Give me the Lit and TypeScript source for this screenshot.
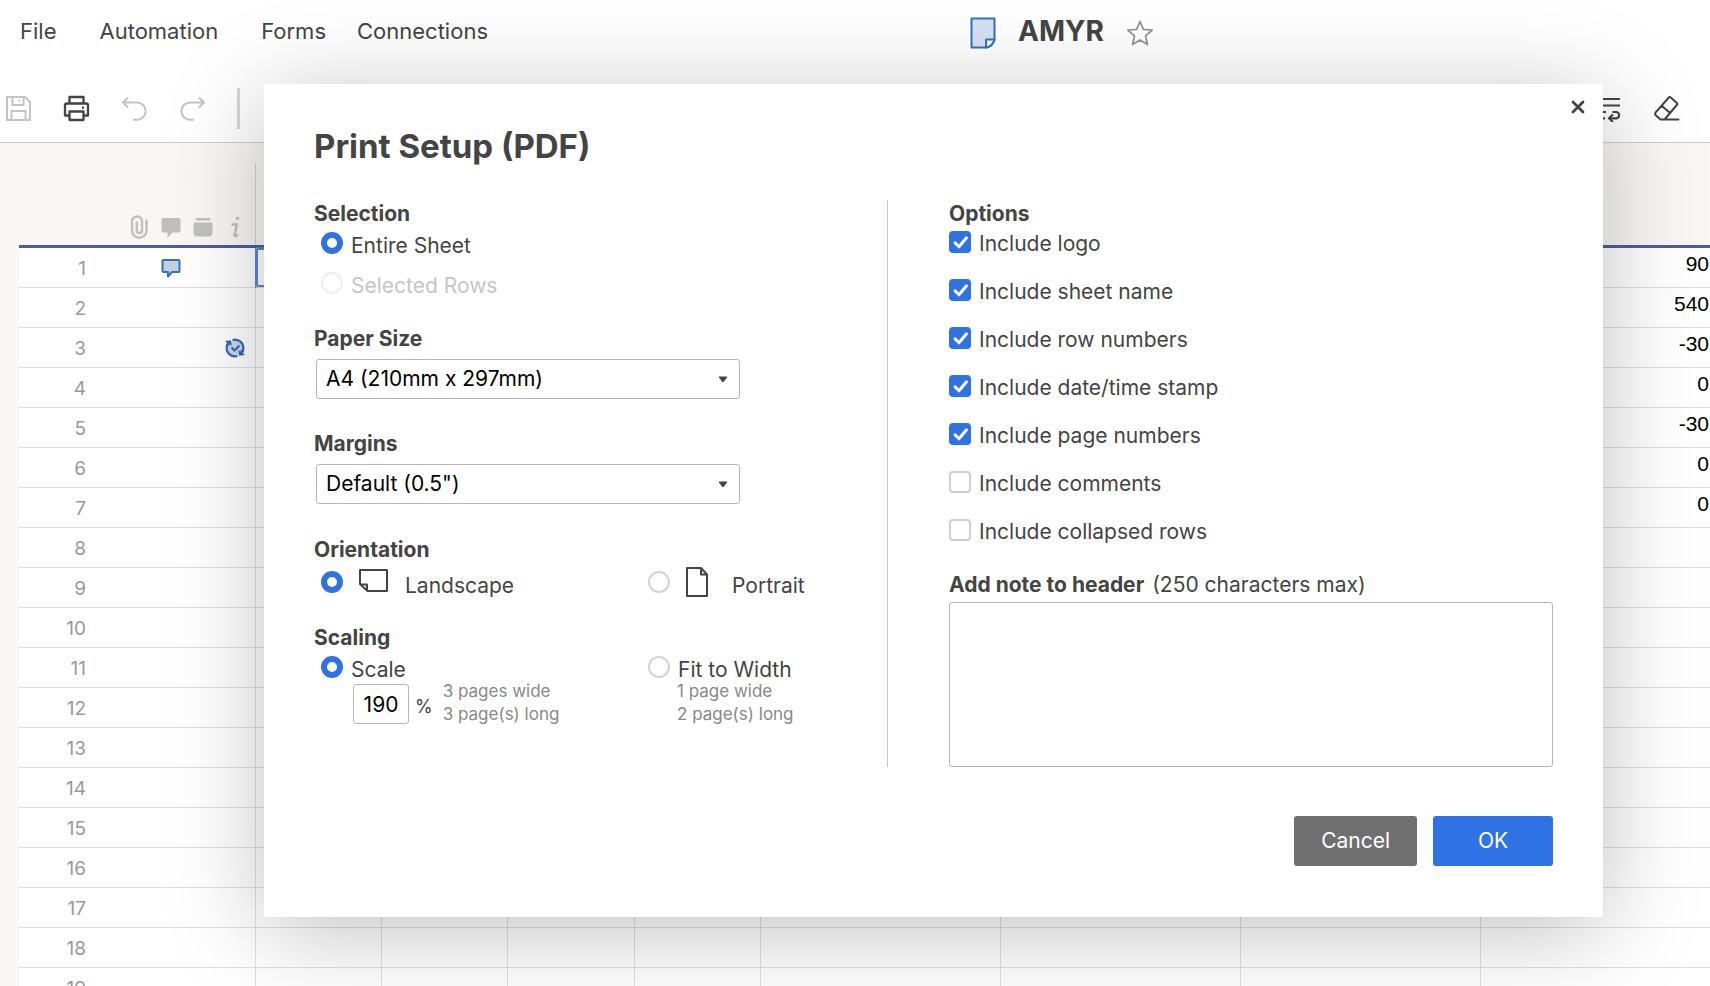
import { LitElement, html, css, svg, nothing } from "lit";
import { customElement, property, state } from "lit/decorators.js";
import { classMap } from "lit/directives/class-map.js";

const icons = {
  save: svg`<g fill="none" stroke="currentColor" stroke-width="2"><path d="M2 2h18l5 5v18H2z"/><path d="M7.500 2v8h11V2M6.500 25v-9h14v9M14.500 4.500v2"/></g>`,
  print: svg`<g fill="none" stroke="currentColor" stroke-width="2.300" stroke-linejoin="round"><path d="M6.500 8.500V2h14v6.500"/><path d="M6.500 20.500h-4.500v-10q0-2 2-2h19q2 0 2 2v10h-4.500"/><path d="M6.500 16.500h14v8.500h-14z"/><path d="M19 12.700h2"/></g>`,
  undo: svg`<path fill="none" stroke="currentColor" stroke-width="2" stroke-linecap="round" stroke-linejoin="round" d="M6.500 3 2 7.500l4.500 4.500M2.500 7.500H16a8.500 8.500 0 0 1 0 17.200h-3"/>`,
  redo: svg`<path fill="none" stroke="currentColor" stroke-width="2" stroke-linecap="round" stroke-linejoin="round" d="M20.500 3 25 7.500 20.500 12M24.500 7.500H11a8.500 8.500 0 0 0 0 17.200h3"/>`,
  wrap: svg`<g fill="none" stroke="currentColor" stroke-width="2.200"><path d="M2 4h23M2 10.500h23M2 17h9M2 23.300h8"/><path d="M17.500 17h3.500a3.100 3.100 0 0 1 0 6.300h-6"/><path d="m18 19.500-4 3.800 4 3.800" stroke-linejoin="round"/></g>`,
  eraser: svg`<path fill="none" stroke="currentColor" stroke-width="2" stroke-linejoin="round" stroke-linecap="round" d="M15.800 2.500q1-1 2 0l6 5.500q1 1 0 2L11.500 24.500H7.500L2.500 20q-1-1.200 0-2.400zM9 11l8.300 7.200M11.500 24.500H25.500"/>`,
  sheet: svg`<g stroke="#2f74bd" stroke-width="2" stroke-linejoin="round"><path fill="#d6dff3" d="M1.500 1.500h23v21q-2 7-8 8h-15z"/><path fill="#fff" d="M16 30.500v-8h8.500q-2 7-8.500 8z"/></g>`,
  star: svg`<path fill="none" stroke="#959595" stroke-width="1.800" stroke-linejoin="round" d="m14 2.500 3.400 7.900 8.600.8-6.500 5.700 1.900 8.600-7.400-4.500-7.400 4.500 1.900-8.600L2 11.200l8.600-.8z"/>`,
  clip: svg`<path fill="none" stroke="currentColor" stroke-width="2.500" stroke-linecap="round" d="M19.500 5.500v10a7.200 7.200 0 0 1-14.500 0V6.500a5 5 0 0 1 10 0v9a2.600 2.600 0 0 1-5.200 0V7.500"/>`,
  chat: svg`<path fill="currentColor" d="M4.500 3h15q2 0 2 2v10.500q0 2-2 2h-6L8.500 23v-5.500h-4q-2 0-2-2V5q0-2 2-2z"/>`,
  stack: svg`<path fill="currentColor" d="M6 3h12q1.500 0 1.500 1.200T18 5.500H6Q4.500 5.500 4.500 4.200T6 3zM4 7.500h16q1.500 0 1.500 1.500v8.500q0 4-4 4H6q-3.500 0-3.500-3.500V9Q2.500 7.500 4 7.500z"/>`,
  info: svg`<g fill="none" stroke="currentColor" stroke-width="2.600" stroke-linecap="round" stroke-linejoin="round"><path d="M9.500 9.500h4.300L11.500 20.500q1.500 1.500 3-.500"/></g><circle cx="14.500" cy="3.500" r="1.700" fill="currentColor"/>`,
  comment: svg`<path fill="#c3d1e8" stroke="#3c70b5" stroke-width="2" stroke-linejoin="round" d="M4.500 4h15q1 0 1 1v10q0 1-1 1h-6.500L9 20.500V16H4.500q-1 0-1-1V5q0-1 1-1z"/>`,
  sync: svg`<circle cx="12" cy="12" r="7.500" fill="#c9d6ea"/><g fill="none" stroke="#3568ae" stroke-width="2.200"><path d="M9.500 4A8.300 8.300 0 0 1 20 14M14.500 20A8.300 8.300 0 0 1 4 10"/><path d="m8.500 11.500 3 3 5-5" stroke-width="2"/></g><path fill="#3568ae" d="M2 5 7.800 4.200 8.800 9.800 6.800 8.500 5 10.500 2.500 9.800 4 6.800zM22 19 16.200 19.800 15.200 14.200 17.200 15.500 19 13.500 21.500 14.200 20 17.200z"/>`,
  landscape: svg`<g fill="none" stroke="#444" stroke-width="2" stroke-linejoin="round"><path d="M2 3h27v21H9.500L2 17z"/><path d="M2 17.500h7v6.500"/></g>`,
  portrait: svg`<g fill="none" stroke="#444" stroke-width="2" stroke-linejoin="round"><path d="M2 1h14l6 6.500V29H2z"/><path d="M16 1v6.500h6"/></g>`,
  close: svg`<path fill="none" stroke="#444" stroke-width="2.800" stroke-linecap="round" d="m2 2 10 10M12 2 2 12"/>`,
  caret: svg`<path fill="#444" stroke="#444" stroke-linejoin="round" d="M1 1h8L5 6z"/>`,
  check: svg`<path fill="none" stroke="#fff" stroke-width="3" stroke-linecap="round" stroke-linejoin="round" d="m6 11.800 4 4 7.500-9"/>`,
};

type IconName = keyof typeof icons;

const icon = (name: IconName, w: number, h = w) =>
  html`<svg class="icon" width=${w} height=${h} viewBox="0 0 ${w} ${h}" aria-hidden="true">${icons[name]}</svg>`;

const shared = css`
  :host {
    display: block;
    box-sizing: border-box;
    font-family: Inter, "Liberation Sans", sans-serif;
    color: #444;
  }
  * {
    box-sizing: border-box;
  }
  button {
    font: inherit;
    color: inherit;
    background: none;
    border: 0;
    padding: 0;
    cursor: pointer;
  }
  .icon {
    display: block;
    flex: none;
  }
`;

@customElement("app-header")
export class AppHeader extends LitElement {
  static styles = [
    shared,
    css`
      :host {
        border-bottom: 1px solid #ccc;
        background: #fff;
      }
      .top {
        display: grid;
        grid-template-columns: 970fr 740fr;
        align-items: center;
        height: 64px;
      }
      .menu {
        display: flex;
        gap: 31px;
        padding: 0 0 2px 20px;
        font-size: 22px;
        line-height: 28px;
      }
      .wide {
        padding-right: 12px;
      }
      .title {
        display: flex;
        align-items: center;
        gap: 22px;
        padding-top: 2px;
      }
      .name {
        margin: 0;
        padding-bottom: 4px;
        font-size: 28px;
        line-height: 32px;
        font-weight: 700;
      }
      .tools {
        display: flex;
        align-items: center;
        justify-content: space-between;
        height: 78px;
        padding: 10px 30px 0 5px;
      }
      .group {
        display: flex;
        align-items: center;
        gap: 31px;
      }
      .muted {
        color: #c4c4c4;
      }
      .rule {
        width: 3px;
        height: 41px;
        background: #d6d6d6;
      }
    `,
  ];

  render() {
    return html`
      <div class="top">
        <nav class="menu">
          <button class="wide">File</button>
          <button class="wide">Automation</button>
          <button>Forms</button>
          <button>Connections</button>
        </nav>
        <div class="title">
          ${icon("sheet", 26, 32)}
          <h1 class="name">AMYR</h1>
          <button aria-label="Add to favorites">${icon("star", 28)}</button>
        </div>
      </div>
      <div class="tools">
        <div class="group">
          <button class="muted" aria-label="Save">${icon("save", 27)}</button>
          <button aria-label="Print">${icon("print", 27)}</button>
          <button class="muted" aria-label="Undo">${icon("undo", 27)}</button>
          <button class="muted" aria-label="Redo">${icon("redo", 27)}</button>
          <span class="rule"></span>
        </div>
        <div class="group">
          <button aria-label="Wrap text">${icon("wrap", 27)}</button>
          <button aria-label="Clear formatting">${icon("eraser", 27)}</button>
        </div>
      </div>
    `;
  }
}

interface Row {
  value?: string;
  comment?: boolean;
  automated?: boolean;
}

@customElement("app-sheet")
export class AppSheet extends LitElement {
  @property({ attribute: false }) rows: Row[] = [];

  static styles = [
    shared,
    css`
      :host {
        padding-left: 19px;
        background: #f8f7f5;
      }
      .sheet {
        width: 100%;
        table-layout: fixed;
        border-collapse: separate;
        border-spacing: 0;
      }
      .c-index {
        width: 237px;
      }
      .c-small {
        width: 126px;
      }
      .c-medium {
        width: 127px;
      }
      .c-large {
        width: 240px;
      }
      th,
      td {
        padding: 0;
        font-weight: 400;
      }
      thead th {
        height: 105px;
        border-bottom: 3px solid #4c5f9c;
        vertical-align: bottom;
      }
      .flags {
        display: grid;
        grid-template-columns: 67px 37px repeat(4, 32px);
        align-items: center;
        justify-items: center;
        height: 39px;
      }
      .index {
        justify-self: end;
        padding-top: 2px;
      }
      .head {
        height: 82px;
        padding-bottom: 6px;
        align-items: end;
        border-right: 1px solid #d4d4d4;
        color: #c0c0bf;
      }
      tbody th,
      tbody td {
        height: 40px;
        background: #fff;
        border-right: 1px solid #dedede;
        border-bottom: 1px solid #dedede;
      }
      tbody th {
        color: #999;
        font-size: 19px;
        line-height: 24px;
      }
      .value {
        padding: 0 1px 8px 0;
        border-right: 0;
        text-align: right;
        color: #000;
        font: 21px/24px "Liberation Sans", Arial, sans-serif;
      }
      tbody .selected {
        box-shadow: inset 0 0 0 2px #5b88cb, 0 0 0 1px #5b88cb;
        border-radius: 2px;
      }
    `,
  ];

  render() {
    return html`
      <table class="sheet">
        <colgroup>
          <col class="c-index" />
          <col class="c-small" />
          <col class="c-small" />
          <col class="c-medium" />
          <col class="c-small" />
          <col class="c-large" />
          <col class="c-large" />
          <col class="c-large" />
          <col />
        </colgroup>
        <thead>
          <tr>
            <th>
              <div class="flags head">
                <span></span><span></span>
                ${icon("clip", 24)}${icon("chat", 24)}${icon("stack", 24)}${icon("info", 24)}
              </div>
            </th>
            ${[1, 2, 3, 4, 5, 6, 7, 8].map(() => html`<th></th>`)}
          </tr>
        </thead>
        <tbody>
          ${this.rows.map(
            (row, i) => html`
              <tr>
                <th scope="row">
                  <div class="flags">
                    <span class="index">${i + 1}</span><span></span><span></span>
                    <span>${row.comment ? icon("comment", 24) : nothing}</span>
                    <span></span>
                    <span>${row.automated ? icon("sync", 24) : nothing}</span>
                  </div>
                </th>
                ${[1, 2, 3, 4, 5, 6, 7].map(
                  (c) => html`<td class=${classMap({ selected: i === 0 && c === 1 })}></td>`
                )}
                <td class="value">${row.value}</td>
              </tr>
            `
          )}
        </tbody>
      </table>
    `;
  }
}

@customElement("print-dialog")
export class PrintDialog extends LitElement {
  @state() private options = [
    { label: "Include logo", on: true },
    { label: "Include sheet name", on: true },
    { label: "Include row numbers", on: true },
    { label: "Include date/time stamp", on: true },
    { label: "Include page numbers", on: true },
    { label: "Include comments", on: false },
    { label: "Include collapsed rows", on: false },
  ];

  static styles = [
    shared,
    css`
      :host {
        position: relative;
        padding: 40px 50px 51px;
        background: #fff;
        box-shadow: 0 14px 90px rgba(0, 0, 0, 0.25);
        font-size: 21px;
        line-height: 28px;
      }
      .close {
        position: absolute;
        top: 11px;
        right: 13px;
        padding: 5px;
      }
      .title {
        margin: 0 0 32px;
        font-size: 33px;
        line-height: 44px;
        font-weight: 700;
      }
      .body {
        display: grid;
        grid-template-columns: 573fr 666fr;
      }
      .right {
        display: flex;
        flex-direction: column;
        border-left: 1px solid #c4c4c4;
        padding-left: 61px;
      }
      fieldset {
        margin: 0;
        padding: 0;
        border: 0;
        min-width: 0;
      }
      .heading {
        display: block;
        padding: 0;
        font-weight: 700;
      }
      .choices {
        display: grid;
        gap: 12px;
        padding: 4px 0 0 7px;
      }
      .choice {
        display: flex;
        align-items: flex-start;
        gap: 8px;
      }
      .radio,
      .box {
        appearance: none;
        flex: none;
        width: 22px;
        height: 22px;
        margin: 0;
        border: 2px solid #d4d4d4;
        border-radius: 50%;
        background: #fff;
      }
      .radio:checked {
        border: 6px solid #2f72e6;
      }
      .disabled {
        color: #c6c6c6;
      }
      .disabled .radio {
        border-color: #efefef;
      }
      .field {
        padding-top: 25px;
      }
      .field + .field {
        padding-top: 31px;
      }
      .select {
        display: grid;
        align-items: center;
        margin: 6px 147px 0 2px;
      }
      .select > * {
        grid-area: 1 / 1;
      }
      .select .icon {
        justify-self: end;
        margin-right: 12px;
        pointer-events: none;
      }
      select,
      textarea,
      .number {
        appearance: none;
        border: 1px solid #b5b5b5;
        border-radius: 3px;
        background: #fff;
        color: #000;
        font: inherit;
      }
      select {
        width: 100%;
        height: 40px;
        padding: 0 9px;
      }
      .pair {
        display: grid;
        grid-template-columns: 327fr 239fr;
        padding-left: 7px;
      }
      .orientation {
        margin-top: 32px;
      }
      .orientation .choice {
        align-items: center;
        gap: 15px;
      }
      .orientation .caption {
        padding: 8px 0 0 2px;
      }
      .scaling {
        margin-top: 24px;
      }
      .scaling .pair {
        padding-top: 4px;
      }
      .detail {
        display: flex;
        gap: 6px;
        padding-left: 32px;
        margin-top: -4px;
      }
      .fit {
        padding-left: 29px;
      }
      .number {
        width: 56px;
        height: 40px;
        margin: 4px 0 0;
        padding: 0;
        text-align: center;
      }
      .pages {
        margin: 0;
        padding-left: 4px;
        color: #888;
        font-size: 17px;
        line-height: 23px;
      }
      .fit .pages {
        padding: 0;
      }
      .percent {
        padding-top: 13px;
        font-size: 18px;
      }
      .options {
        display: grid;
        gap: 20px;
        padding: 2px 0 25px;
      }
      .option {
        display: grid;
        grid-template-columns: 22px 1fr;
        column-gap: 8px;
      }
      .option > .box,
      .option > .icon {
        grid-area: 1 / 1;
        margin-top: 1px;
      }
      .option > .icon {
        pointer-events: none;
      }
      .option > span {
        grid-area: 1 / 2;
      }
      .box {
        border-radius: 4px;
        border-color: #d0d0d0;
      }
      .box:checked {
        background: #2f72e6;
        border-color: #2f72e6;
      }
      .note {
        display: flex;
        gap: 8px;
      }
      textarea {
        display: block;
        width: 100%;
        height: 165px;
        margin: 3px 0 0;
        padding: 8px;
        resize: none;
      }
      .footer {
        display: flex;
        justify-content: flex-end;
        gap: 16px;
        padding-top: 49px;
      }
      .action {
        min-width: 120px;
        height: 50px;
        padding: 0 27px;
        border-radius: 3px;
        background: #2f72e6;
        color: #fff;
      }
      .cancel {
        background: #707070;
      }
    `,
  ];

  render() {
    return html`
      <button class="close" aria-label="Close">${icon("close", 14)}</button>
      <h2 class="title">Print Setup (PDF)</h2>
      <div class="body">
        <div class="left">
          <fieldset>
            <legend class="heading">Selection</legend>
            <div class="choices">
              <label class="choice"><input class="radio" type="radio" name="selection" checked />Entire Sheet</label>
              <label class="choice disabled"><input class="radio" type="radio" name="selection" disabled />Selected Rows</label>
            </div>
          </fieldset>
          <div class="field">
            <label class="heading" for="paper">Paper Size</label>
            <div class="select">
              <select id="paper"><option>A4 (210mm x 297mm)</option></select>
              ${icon("caret", 10, 7)}
            </div>
          </div>
          <div class="field">
            <label class="heading" for="margins">Margins</label>
            <div class="select">
              <select id="margins"><option>Default (0.5")</option></select>
              ${icon("caret", 10, 7)}
            </div>
          </div>
          <fieldset class="orientation">
            <legend class="heading">Orientation</legend>
            <div class="pair">
              <label class="choice"><input class="radio" type="radio" name="orientation" checked />${icon("landscape", 30)}<span class="caption">Landscape</span></label>
              <label class="choice"><input class="radio" type="radio" name="orientation" />${icon("portrait", 30)}<span class="caption">Portrait</span></label>
            </div>
          </fieldset>
          <fieldset class="scaling">
            <legend class="heading">Scaling</legend>
            <div class="pair">
              <div>
                <label class="choice"><input class="radio" type="radio" name="scaling" checked />Scale</label>
                <div class="detail">
                  <input class="number" type="text" inputmode="numeric" aria-label="Scale percentage" value="190" />
                  <span class="percent">%</span>
                  <p class="pages">3 pages wide<br />3 page(s) long</p>
                </div>
              </div>
              <div>
                <label class="choice"><input class="radio" type="radio" name="scaling" />Fit to Width</label>
                <div class="detail fit"><p class="pages">1 page wide<br />2 page(s) long</p></div>
              </div>
            </div>
          </fieldset>
        </div>
        <div class="right">
          <fieldset>
            <legend class="heading">Options</legend>
            <div class="options">
              ${this.options.map(
                (o) => html`
                  <label class="option">
                    <input class="box" type="checkbox" .checked=${o.on} @change=${(e: Event) => this.toggle(o.label, e)} />
                    ${o.on ? icon("check", 22) : nothing}
                    <span>${o.label}</span>
                  </label>
                `
              )}
            </div>
          </fieldset>
          <label class="note" for="note"><b>Add note to header</b><span>(250 characters max)</span></label>
          <textarea id="note" maxlength="250"></textarea>
        </div>
      </div>
      <div class="footer">
        <button class="action cancel">Cancel</button>
        <button class="action">OK</button>
      </div>
    `;
  }

  private toggle(label: string, e: Event) {
    const on = (e.target as HTMLInputElement).checked;
    this.options = this.options.map((o) => (o.label === label ? { ...o, on } : o));
  }
}

@customElement("app-root")
export class AppRoot extends LitElement {
  private rows: Row[] = [
    { value: "90", comment: true },
    { value: "540" },
    { value: "-30", automated: true },
    { value: "0" },
    { value: "-30" },
    { value: "0" },
    { value: "0" },
    ...Array.from({ length: 12 }, () => ({})),
  ];

  static styles = css`
    :host {
      display: block;
      position: relative;
      height: 100vh;
      overflow: hidden;
      background: #f8f7f5;
    }
    .overlay {
      position: absolute;
      inset: 0;
      padding: 84px 107px 0 264px;
    }
  `;

  render() {
    return html`
      <app-header></app-header>
      <app-sheet .rows=${this.rows}></app-sheet>
      <div class="overlay"><print-dialog role="dialog" aria-label="Print Setup (PDF)"></print-dialog></div>
    `;
  }
}
